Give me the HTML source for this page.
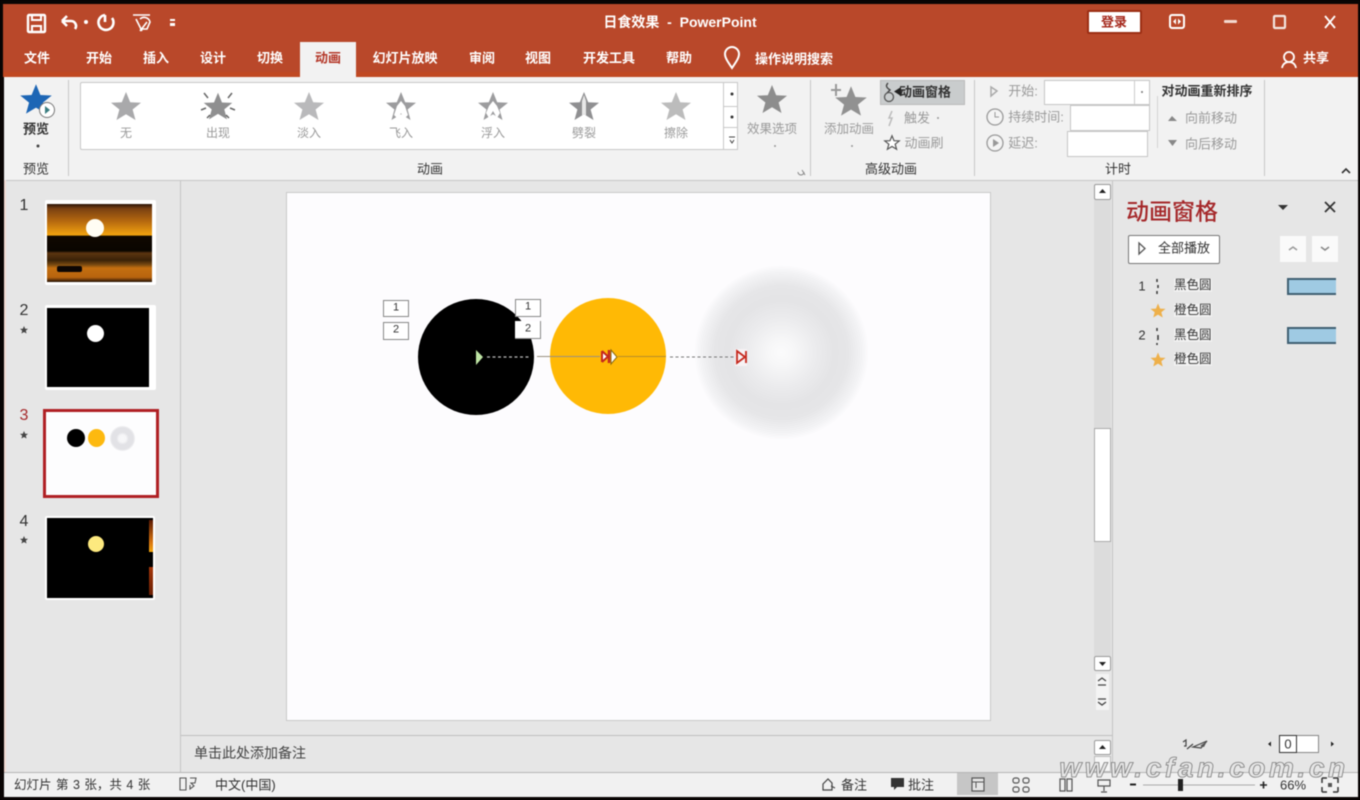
<!DOCTYPE html>
<html lang="zh"><head><meta charset="utf-8"><title>日食效果 - PowerPoint</title>
<style>
html,body{margin:0;padding:0;background:#000;}
#p{position:relative;width:1360px;height:800px;overflow:hidden;background:#0a0505;font-family:"Liberation Sans","Noto Sans CJK SC",sans-serif;color:#333;filter:blur(.4px);}
#p div{position:absolute;box-sizing:border-box;}
.t{transform:translate(-50%,-50%);white-space:nowrap;line-height:1;font-size:13px;}
.w{color:#fff;font-weight:700;}
.g{color:#9a9a9a;}
.l{transform:translateY(-50%);white-space:nowrap;line-height:1;font-size:13px;}
svg{position:absolute;overflow:visible;left:0;top:0;}
</style></head><body><div id="p">
<div style="left:3px;top:4px;width:1355px;height:72px;background:#b9482a"></div>
<div style="left:3px;top:72px;width:1355px;height:5px;background:#c04822"></div>
<div style="left:4px;top:77px;width:1354px;height:103px;background:#f2f2f2"></div>
<div style="left:4px;top:180px;width:1354px;height:592px;background:#e6e6e6"></div>
<div style="left:4px;top:772px;width:1354px;height:25px;background:#f1f1f1;border-top:1px solid #b5b5b5"></div>
<div style="left:4px;top:180px;width:1354px;height:1px;background:#c6c6c6"></div>
<div style="left:4px;top:180px;width:2px;height:592px;background:#f3dcd5"></div>

<div class="t w" style="left:680px;top:22px;font-size:14px">日食效果&nbsp; -&nbsp; PowerPoint</div>
<div style="left:1087px;top:10px;width:55px;height:24px;background:#fff;border:2px solid #9c2e14;border-radius:2px"></div>
<div class="t" style="left:1114px;top:22px;color:#a5281c;font-weight:700">登录</div>

<div style="left:300px;top:42px;width:56px;height:36px;background:#f2f2f2"></div>
<div class="t w" style="left:37px;top:58px">文件</div>
<div class="t w" style="left:99px;top:58px">开始</div>
<div class="t w" style="left:156px;top:58px">插入</div>
<div class="t w" style="left:213px;top:58px">设计</div>
<div class="t w" style="left:270px;top:58px">切换</div>
<div class="t" style="left:328px;top:58px;color:#b5392a;font-weight:700">动画</div>
<div class="t w" style="left:405px;top:58px">幻灯片放映</div>
<div class="t w" style="left:482px;top:58px">审阅</div>
<div class="t w" style="left:538px;top:58px">视图</div>
<div class="t w" style="left:609px;top:58px">开发工具</div>
<div class="t w" style="left:679px;top:58px">帮助</div>
<div class="t w" style="left:794px;top:59px">操作说明搜索</div>
<div class="t w" style="left:1316px;top:58px">共享</div>

<div style="left:80px;top:82px;width:658px;height:68px;background:#fff;border:1px solid #c8c8c8;border-radius:2px"></div>
<div style="left:723px;top:82px;width:15px;height:68px;background:#fff;border:1px solid #c8c8c8"></div>
<div style="left:723px;top:106px;width:15px;height:22px;border:1px solid #c8c8c8"></div>
<div style="left:880px;top:80px;width:85px;height:25px;background:#c9cccd;border:1px solid #bbb"></div>
<div style="left:1044px;top:80px;width:106px;height:25px;background:#fff;border:1px solid #c6c6c6"></div>
<div style="left:1070px;top:105px;width:80px;height:26px;background:#fff;border:1px solid #c6c6c6"></div>
<div style="left:1067px;top:131px;width:81px;height:26px;background:#fff;border:1px solid #c6c6c6"></div>
<div style="left:1134px;top:81px;width:1px;height:23px;background:#ccc"></div>

<div class="t" style="left:36px;top:129px;font-weight:700">预览</div>
<div class="t" style="left:36px;top:169px">预览</div>
<div class="t g" style="left:126px;top:133px;font-size:12px">无</div>
<div class="t g" style="left:218px;top:133px;font-size:12px">出现</div>
<div class="t g" style="left:309px;top:133px;font-size:12px">淡入</div>
<div class="t g" style="left:401px;top:133px;font-size:12px">飞入</div>
<div class="t g" style="left:493px;top:133px;font-size:12px">浮入</div>
<div class="t g" style="left:584px;top:133px;font-size:12px">劈裂</div>
<div class="t g" style="left:676px;top:133px;font-size:12px">擦除</div>
<div class="t g" style="left:772px;top:129px;font-size:12.5px">效果选项</div>
<div class="t" style="left:430px;top:169px">动画</div>
<div class="t g" style="left:849px;top:129px;font-size:12.5px">添加动画</div>
<div class="t" style="left:925px;top:92px;font-weight:700;font-size:13px">动画窗格</div>
<div class="t g" style="left:917px;top:118px">触发</div>
<div class="t g" style="left:924px;top:143px">动画刷</div>
<div class="t" style="left:891px;top:169px">高级动画</div>
<div class="t g" style="left:1023px;top:91px">开始:</div>
<div class="t g" style="left:1036px;top:117px">持续时间:</div>
<div class="t g" style="left:1023px;top:143px">延迟:</div>
<div class="t" style="left:1118px;top:169px">计时</div>
<div class="t" style="left:1207px;top:91px;font-weight:700">对动画重新排序</div>
<div class="t g" style="left:1211px;top:118px">向前移动</div>
<div class="t g" style="left:1211px;top:144px">向后移动</div>

<div style="left:68px;top:80px;width:1px;height:96px;background:#c8c8c8"></div>
<div style="left:810px;top:80px;width:1px;height:96px;background:#c8c8c8"></div>
<div style="left:974px;top:80px;width:1px;height:96px;background:#c8c8c8"></div>
<div style="left:1264px;top:80px;width:1px;height:96px;background:#c8c8c8"></div>
<div style="left:1157px;top:96px;width:1px;height:52px;background:#d4d4d4"></div>

<div style="left:180px;top:181px;width:1px;height:591px;background:#c6c6c6"></div>
<div class="t" style="left:24px;top:206px;font-size:16px">1</div>
<div class="t" style="left:24px;top:311px;font-size:16px">2</div>
<div class="t" style="left:24px;top:416px;font-size:16px;color:#a5282a">3</div>
<div class="t" style="left:24px;top:522px;font-size:16px">4</div>
<div style="left:45px;top:200px;width:111px;height:85px;background:#fff;border-radius:2px"></div>
<div style="left:47px;top:204px;width:105px;height:78px;background:linear-gradient(#2a1508 0,#7a4112 6%,#b5680f 22%,#f3a40f 40%,#100800 41%,#0a0500 60%,#5c3510 63%,#3a2208 72%,#7a4a10 78%,#c46f10 82%,#b8640e 94%,#201004 100%)"></div>
<div style="left:57px;top:266px;width:25px;height:6px;background:#0c0604;border-radius:2px"></div>
<div style="left:86px;top:219px;width:18px;height:18px;background:#fffdf4;border-radius:50%"></div>
<div style="left:45px;top:305px;width:111px;height:85px;background:#fff;border-radius:2px"></div>
<div style="left:47px;top:308px;width:102px;height:79px;background:#000"></div>
<div style="left:87px;top:325px;width:17px;height:17px;background:#fff;border-radius:50%"></div>
<div style="left:43px;top:409px;width:116px;height:89px;background:#fdfdfe;border:3px solid #b02024"></div>
<div style="left:67px;top:429px;width:18px;height:18px;background:#000;border-radius:50%"></div>
<div style="left:88px;top:429px;width:17px;height:18px;background:#fdb90f;border-radius:50%"></div>
<div style="left:110px;top:426px;width:25px;height:25px;background:radial-gradient(circle closest-side,#f8f8fa 0,#f5f5f7 30%,#e2e2e6 50%,#e2e2e6 85%,#f0f0f2 100%);border-radius:50%"></div>
<div style="left:45px;top:516px;width:110px;height:84px;background:#fff;border-radius:2px"></div>
<div style="left:47px;top:518px;width:106px;height:80px;background:#000"></div>
<div style="left:149px;top:520px;width:4px;height:32px;background:linear-gradient(#5a1a04,#d9750f 70%,#f2a70f)"></div>
<div style="left:149px;top:567px;width:4px;height:28px;background:linear-gradient(#a5370a,#6a1f04)"></div>
<div style="left:88px;top:536px;width:16px;height:16px;background:#fde97f;border-radius:50%"></div>

<div style="left:286px;top:192px;width:705px;height:529px;background:#fdfcfe;border:1px solid #c9c9c9"></div>
<div style="left:181px;top:735px;width:931px;height:1px;background:#bfbfbf"></div>
<div class="l" style="left:194px;top:753px;font-size:14px;color:#444">单击此处添加备注</div>

<div style="left:418px;top:299px;width:116px;height:116px;background:#000;border-radius:50%"></div>
<div style="left:550px;top:298px;width:116px;height:116px;background:#ffb905;border-radius:50%"></div>
<div style="left:694px;top:265px;width:175px;height:175px;background:radial-gradient(circle closest-side,#fbfbfc 0,#f7f7f8 14%,#ebebed 40%,#e4e4e6 60%,#e6e6e8 76%,#f3f3f5 92%,#fdfcfe 100%);border-radius:50%"></div>
<svg width="1360" height="800">
<line x1="487" y1="357" x2="530" y2="357" stroke="#bbb" stroke-width="1.3" stroke-dasharray="3 2.5"/>
<line x1="537" y1="356.5" x2="600" y2="356.5" stroke="#9a9080" stroke-width="1"/>
<line x1="618" y1="356.5" x2="666" y2="356.5" stroke="#b58c2a" stroke-width="1"/>
<line x1="670" y1="357" x2="734" y2="357" stroke="#777" stroke-width="1.1" stroke-dasharray="3 2.5"/>
<polygon points="476,350 483,357 476,365" fill="#bfe5a5"/>
<path d="M602 351v11M602 351l6 5.500-6 5.500" fill="#fff" stroke="#c5281d" stroke-width="2"/>
<path d="M609 350v13" stroke="#c5281d" stroke-width="2.500"/>
<polygon points="611,350 617,357 611,364" fill="#fff" stroke="#8a6a10"/>
<rect x="735" y="349" width="12" height="17" fill="#f7f2f4"/>
<path d="M746 351v12M737 351l8 6-8 6z" fill="none" stroke="#c5281d" stroke-width="1.800"/>
</svg>
<div style="left:383px;top:300px;width:26px;height:17px;background:#fff;border:1px solid #888"></div>
<div class="t" style="left:396px;top:308px;font-size:11px">1</div>
<div style="left:383px;top:322px;width:26px;height:18px;background:#fff;border:1px solid #888"></div>
<div class="t" style="left:396px;top:330px;font-size:11px">2</div>
<div style="left:515px;top:299px;width:26px;height:18px;background:#fff;border:1px solid #888"></div>
<div class="t" style="left:528px;top:307px;font-size:11px">1</div>
<div style="left:515px;top:321px;width:26px;height:18px;background:#fff;border:1px solid #888;border-left:0;border-top:0"></div>
<div class="t" style="left:528px;top:329px;font-size:11px">2</div>

<div style="left:1094px;top:200px;width:17px;height:456px;background:#dcdcdc"></div>
<div style="left:1094px;top:184px;width:17px;height:16px;background:#fff;border:1px solid #999;border-radius:2px"></div>
<div style="left:1094px;top:428px;width:17px;height:114px;background:#fff;border:1px solid #aaa"></div>
<div style="left:1094px;top:656px;width:17px;height:15px;background:#fff;border:1px solid #999;border-radius:2px"></div>
<div style="left:1096px;top:674px;width:13px;height:36px;background:#f4f4f4"></div>
<div style="left:1112px;top:181px;width:1px;height:591px;background:#c4c4c4"></div>
<div style="left:1094px;top:740px;width:17px;height:15px;background:#fff;border:1px solid #999;border-radius:2px"></div>
<div style="left:1094px;top:756px;width:17px;height:16px;background:#f6f6f6;border:1px solid #bbb"></div>

<div class="l" style="left:1126px;top:212px;font-size:23px;color:#a5282a;font-weight:500">动画窗格</div>
<div style="left:1128px;top:235px;width:92px;height:29px;background:#fff;border:1px solid #777;border-radius:2px"></div>
<div class="l" style="left:1158px;top:248px;font-size:13px">全部播放</div>
<div style="left:1280px;top:236px;width:26px;height:26px;background:#fafafa"></div>
<div style="left:1312px;top:236px;width:26px;height:26px;background:#fafafa"></div>
<div class="t" style="left:1142px;top:286px;font-size:13px">1</div>
<div class="t" style="left:1142px;top:335px;font-size:13px">2</div>
<div class="l" style="left:1174px;top:285px;font-size:12.500px;background:#f2f2f2">黑色圆</div>
<div class="l" style="left:1174px;top:310px;font-size:12.500px;background:#f2f2f2">橙色圆</div>
<div class="l" style="left:1174px;top:335px;font-size:12.500px;background:#f2f2f2">黑色圆</div>
<div class="l" style="left:1174px;top:359px;font-size:12.500px;background:#f2f2f2">橙色圆</div>
<div style="left:1287px;top:278px;width:49px;height:17px;background:#9fcae3;border:2px solid #3f5f72;border-right:0"></div>
<div style="left:1287px;top:327px;width:49px;height:17px;background:#9fcae3;border:2px solid #3f5f72;border-right:0"></div>

<div style="left:1279px;top:735px;width:40px;height:18px;background:#fff;border:1px solid #888"></div>
<div style="left:1279px;top:735px;width:18px;height:18px;background:#fff;border:1px solid #333"></div>
<div class="t" style="left:1288px;top:744px;font-size:13px">0</div>

<div class="l" style="left:14px;top:785px;font-size:12.500px;word-spacing:1px">幻灯片 第 3 张，共 4 张</div>
<div class="l" style="left:215px;top:785px;font-size:13px">中文(中国)</div>
<div class="t" style="left:854px;top:785px;font-size:13px">备注</div>
<div class="t" style="left:921px;top:785px;font-size:13px">批注</div>
<div style="left:957px;top:773px;width:41px;height:22px;background:#c6c6c6"></div>
<div class="t" style="left:1293px;top:785px;font-size:13px">66%</div>

<svg width="1360" height="800">
<defs><polygon id="s" points="0,-15 4.200,-4.800 15,-4.300 6.600,2.500 9.500,13 0,7.300 -9.500,13 -6.600,2.500 -15,-4.300 -4.200,-4.800"/></defs>
<g fill="none" stroke="#fff" stroke-width="2.400">
<rect x="28" y="15" width="17" height="17" rx="1"/><path d="M32 15v5h9v-5M32 32v-6h9v6" stroke-width="2"/>
<path d="M62 21l5-5M62 21l5 5M62 21h9a5 5 0 0 1 4 8" stroke-width="2.600"/>
<path d="M105 15a7.500 7.500 0 1 0 7 3M105 15v7" stroke-width="2.600"/>
<path d="M133 15h17M140 19a6 6 0 0 1 10 3l-3 7h-7M136 19l6 12M147 22l-7 9" stroke-width="1.600"/>
</g>
<circle cx="86" cy="22" r="2" fill="#fff"/><rect x="170" y="19" width="5" height="2" fill="#fff"/><rect x="170" y="23" width="5" height="3" fill="#fff"/>
<rect x="1170" y="15" width="14" height="13" rx="2" fill="none" stroke="#fff" stroke-width="2"/><path d="M1173 21.500l3-3v6zM1181 21.500l-3-3v6z" fill="#fff"/>
<rect x="1224" y="20" width="13" height="3" rx="1" fill="#f3d9cf"/>
<rect x="1274" y="16" width="11" height="12" rx="1" fill="none" stroke="#f3e6e0" stroke-width="2.200"/>
<path d="M1325 16l10 12M1335 16l-10 12" stroke="#fff" stroke-width="1.800"/>
<path d="M732 68c-4-6-7-10-7-14a7 7 0 0 1 14 0c0 4-3 8-7 14z" fill="none" stroke="#fff" stroke-width="2"/>
<circle cx="1289" cy="57" r="5" fill="none" stroke="#fff" stroke-width="1.800"/><path d="M1282 68c1-5 4-6 7-6s6 1 7 6" fill="none" stroke="#fff" stroke-width="1.800"/>
<g fill="#a9a9ab">
<use href="#s" transform="translate(126 107)"/>
<use href="#s" transform="translate(218 107) scale(.95)" fill="#8f8f90"/>
<use href="#s" transform="translate(309 107)" fill="#b9b9bb"/>
<use href="#s" transform="translate(401 107)" fill="#9c9c9e"/>
<use href="#s" transform="translate(493 107)" fill="#9c9c9e"/>
<use href="#s" transform="translate(584 107)" fill="#8f8f91"/>
<use href="#s" transform="translate(676 107)" fill="#bcbcbc"/>
<use href="#s" transform="translate(772 100)" fill="#8d8d8d"/>
<use href="#s" transform="translate(851 102) scale(1.050)" fill="#919191"/>
</g>
<path d="M397 106l4-5 4 5 3 9-4 4-3-6-3 6-4-4z" fill="#fff"/>
<path d="M489 106l4-5 4 5 3 7-3 5-4-7-4 7-3-5z" fill="#fff"/>
<path d="M584 95l2 6v15l-2-2-2 2v-15z" fill="#e8e8e8"/>
<path d="M204 93l4 5M232 93l-4 5M201 110l5-2M235 110l-5-2M207 118l3-3M229 118l-3-3" stroke="#666" stroke-width="1.500"/>
<path d="M836 84v12M831 90h10" stroke="#999" stroke-width="2"/>
<use href="#s" transform="translate(36 100) scale(1.050)" fill="#1d66b5"/>
<circle cx="47" cy="110" r="7.500" fill="#fff" stroke="#777"/><path d="M45 106l5 4-5 4z" fill="#3a7d80"/>
<circle cx="38" cy="146" r="1.500" fill="#444"/>
<circle cx="732" cy="94" r="1.500" fill="#333"/><circle cx="732" cy="117" r="1.500" fill="#333"/><path d="M729 137h6M730 140l2 3 2-3" stroke="#444" fill="none"/>
<circle cx="775" cy="146" r="1" fill="#999"/><circle cx="852" cy="146" r="1" fill="#999"/>
<path d="M798 172a3 3 0 1 0 6 0M802 170l3 5" stroke="#888" fill="none"/>
<path d="M888 83c-3 3-1 5 2 7l-3 3" fill="none" stroke="#444" stroke-width="1.400"/><circle cx="889" cy="97" r="4.500" fill="none" stroke="#555" stroke-width="1.300"/><path d="M901 87v9l-7-4.500z" fill="#222"/>
<path d="M892 111l-3 7h3l-3 8" stroke="#bbb" fill="none" stroke-width="1.500"/><circle cx="938" cy="118" r="1" fill="#999"/>
<use href="#s" transform="translate(892 143) scale(.48)" fill="#fff" stroke="#555" stroke-width="2.500"/>
<path d="M991 87l6 4-6 5z" fill="none" stroke="#aaa" stroke-width="1.500"/>
<circle cx="995" cy="117" r="8" fill="#f4f4f4" stroke="#999" stroke-width="1.300"/><path d="M995 112v5h4" stroke="#999" fill="none"/>
<circle cx="995" cy="143" r="8" fill="#f4f4f4" stroke="#999" stroke-width="1.300"/><path d="M993 139l6 4-6 4z" fill="#999"/>
<circle cx="1142" cy="92" r="1" fill="#777"/>
<path d="M1168 121l4-5 5 5zM1168 140h9l-4.500 6z" fill="#888"/>
<path d="M1342 173l4-4 4 4" stroke="#333" fill="none" stroke-width="1.600"/>
<use href="#s" transform="translate(24 330) scale(.27)" fill="#444"/>
<use href="#s" transform="translate(24 435) scale(.27)" fill="#444"/>
<use href="#s" transform="translate(24 540) scale(.27)" fill="#444"/>
<path d="M1099 193l3.500-4 3.500 4z" fill="#222"/><path d="M1099 662h7l-3.500 4z" fill="#222"/><path d="M1099 749l3.500-4 3.500 4z" fill="#222"/>
<path d="M1098 681l4-3 4 3M1098 685h8M1098 699h8M1098 702l4 3 4-3" stroke="#444" fill="none" stroke-width="1.300"/>
<path d="M1278 205h10l-5 5z" fill="#333"/><path d="M1325 202l10 10M1335 202l-10 10" stroke="#333" stroke-width="1.800"/>
<path d="M1139 243l6 5.500-6 5.500z" fill="none" stroke="#555" stroke-width="1.300"/>
<path d="M1289 250l4-3 4 3" stroke="#999" fill="none" stroke-width="1.500"/><path d="M1321 247l4 3 4-3" stroke="#888" fill="none" stroke-width="1.500"/>
<g stroke="#333" stroke-width="1.500" fill="#333"><path d="M1157 279v3M1158 285v3M1157 291v3M1157 328v3M1158 335v5M1157 343v2"/></g>
<use href="#s" transform="translate(1158 311) scale(.5)" fill="#eeb04a"/>
<use href="#s" transform="translate(1158 360) scale(.5)" fill="#eeb04a"/>
<path d="M1183 742l3-2v6h-2M1187 749l6-5M1193 747l14-6-6 7z" stroke="#444" fill="none" stroke-width="1.200"/><path d="M1200 746l7-5-3 6z" fill="#555"/>
<path d="M1268 744l3-2.500v5zM1331 741.500l3 2.500-3 2.500z" fill="#222"/>
<path d="M180 778h6v12h-6zM190 778h6l-1 5h-4l3 3-4 3v-4" fill="none" stroke="#555" stroke-width="1.100"/>
<path d="M823 790v-6l5-5 4 4v7zM831 786l4 2" fill="none" stroke="#444" stroke-width="1.200"/>
<path d="M891 778h13v9h-7l-3 3v-3h-3z" fill="#333"/>
<rect x="972" y="778" width="12" height="13" fill="#e4e4e4" stroke="#555" stroke-width="1.200"/><path d="M972 782h4v6M976 782h8" stroke="#555" fill="none"/>
<g fill="none" stroke="#555" stroke-width="1.200"><rect x="1013" y="778" width="6" height="5" rx="2"/><rect x="1023" y="778" width="6" height="5" rx="2"/><rect x="1013" y="787" width="6" height="5" rx="2"/><rect x="1023" y="787" width="6" height="5" rx="2"/>
<path d="M1060 779h5v12h-5zM1067 779h5v12h-5z"/><path d="M1098 780h12v6h-12zM1104 786v5M1101 792h6"/></g>
<path d="M1130 784.500h6" stroke="#222" stroke-width="2"/><path d="M1143 785h112" stroke="#aaa"/><rect x="1178" y="779" width="5" height="12" fill="#222"/><path d="M1260 785h7M1263.500 781.500v7" stroke="#222" stroke-width="1.600"/>
<path d="M1322 778h5M1322 778v5M1338 778h-5M1338 778v5M1322 792h5M1322 792v-5M1338 792h-5M1338 792v-5" stroke="#333" stroke-width="1.500" fill="none"/><rect x="1328" y="783" width="4" height="4" fill="#555"/>
</svg>
<div class="t" style="left:1204px;top:768px;font-size:28px;font-style:italic;font-weight:700;color:#e6e6e6;letter-spacing:3.600px;-webkit-text-stroke:.8px #7c7c7c;font-family:'Liberation Sans',sans-serif">www.cfan.com.cn</div>
<div style="left:0;top:0;width:1360px;height:4px;background:#0a0504"></div>
<div style="left:0;top:797px;width:1360px;height:3px;background:#0a0504"></div>
<div style="left:0;top:0;width:3px;height:800px;background:#0a0504"></div>
<div style="left:1358px;top:0;width:2px;height:800px;background:#0a0504"></div>
</div></body></html>
